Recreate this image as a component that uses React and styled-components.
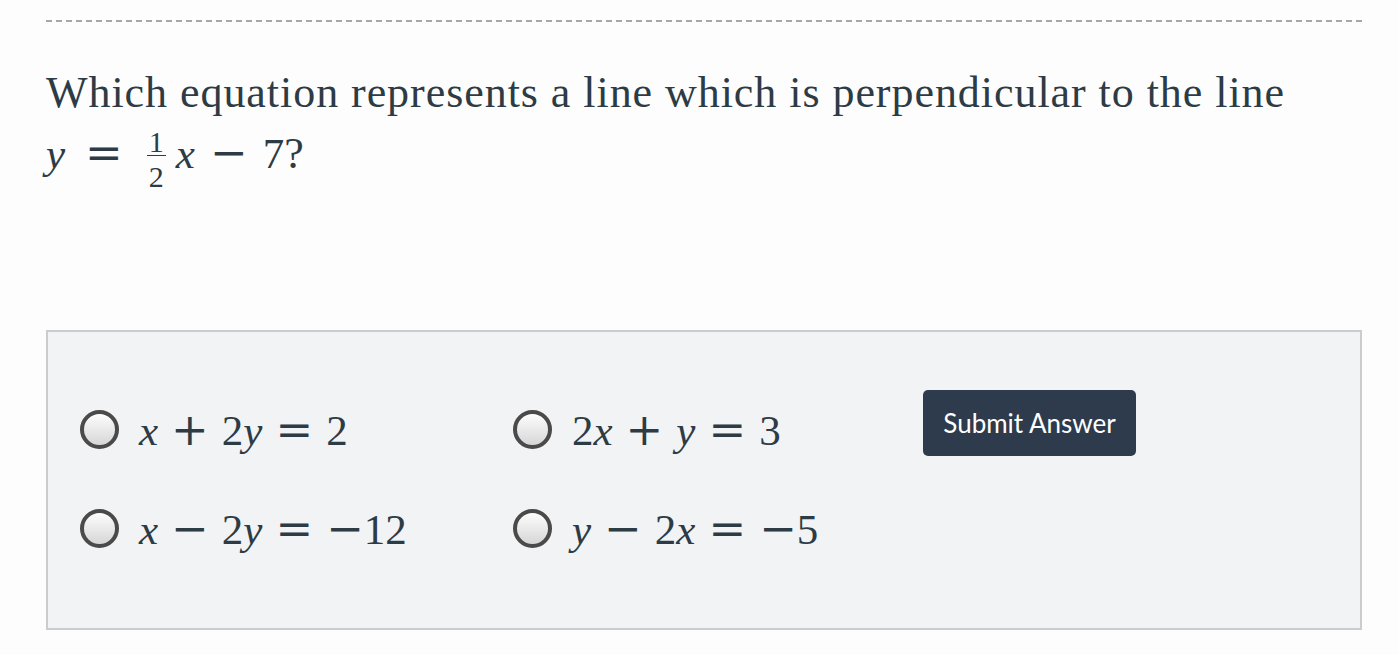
import React from 'react'
import styled, { createGlobalStyle } from 'styled-components'

const Global = createGlobalStyle`
  body {
    margin: 0;
    background: #fdfdfd;
    color: #2d3b45;
  }
`

const Page = styled.div`
  width: 1316px;
  padding: 20px 0 0 46px;
`

const Divider = styled.div`
  border-top: 2px dashed #a4a6a8;
  height: 0;
`

const Question = styled.div`
  margin-top: 41px;
  font-family: "Liberation Serif", "DejaVu Serif", serif;
  font-size: 44px;
  line-height: 60px;
  letter-spacing: 0.95px;
  color: #2d3b45;
`

const Math = styled.span`
  font-family: "Liberation Serif", serif;
  font-size: 43px;
  letter-spacing: 0;
  color: #2d3b45;
  white-space: nowrap;
`

const V = styled.i`
  font-style: italic;
`

const Op = styled.span`
  font-family: "DejaVu Serif", serif;
  font-size: 45px;
  margin: 0 ${p => p.gap ?? 13}px;
`

const Frac = styled.span`
  display: inline-flex;
  flex-direction: column;
  align-items: center;
  vertical-align: 16px;
  font-size: 30px;
  line-height: 20px;
  margin: 0 10px 0 4px;
  & > span:first-child {
    border-bottom: 1.5px solid #2d3b45;
    padding: 0 2px 3px;
  }
  & > span:last-child {
    padding-top: 11px;
  }
`

const Panel = styled.div`
  margin-top: 143px;
  height: 300px;
  box-sizing: border-box;
  background: #f2f3f5;
  border: 2px solid #cbccce;
  display: grid;
  grid-template-columns: 433px 410px auto;
  grid-template-rows: 99px 99px;
  align-items: center;
  padding: 48px 0 50px 32px;
`

const Choice = styled.label`
  display: flex;
  align-items: center;
  gap: 20px;
`

const Radio = styled.span`
  width: 31px;
  height: 31px;
  border-radius: 50%;
  border: 4px solid #4a4a4a;
  background: linear-gradient(#fdfdfd, #d6d6d6);
  flex-shrink: 0;
`

const Submit = styled.button`
  justify-self: start;
  margin-top: -13px;
  width: 213px;
  height: 66px;
  border: none;
  border-radius: 5px;
  background: #2d3b4c;
  color: #fff;
  font-family: Lato, "Open Sans", sans-serif;
  font-size: 26px;
`

const eq = (parts) =>
  parts.map((p, i) =>
    typeof p === 'string' && /^[xy]$/.test(p) ? <V key={i}>{p}</V>
    : p.op ? <Op key={i} gap={p.gap}>{p.op}</Op>
    : <span key={i}>{p}</span>
  )

const neg = { op: '−', gap: 0 }

const options = [
  ['x', { op: '+' }, '2', 'y', { op: '=' }, '2'],
  ['2', 'x', { op: '+' }, 'y', { op: '=' }, '3'],
  ['x', { op: '−' }, '2', 'y', { op: '=' }, neg, '12'],
  ['y', { op: '−' }, '2', 'x', { op: '=' }, neg, '5'],
]

export default function App() {
  return (
    <Page>
      <Global />
      <Divider />
      <Question>
        Which equation represents a line which is perpendicular to the line
        <br />
        <Math>
          <V>y</V><Op gap={20}>=</Op>
          <Frac><span>1</span><span>2</span></Frac>
          <V>x</V><Op gap={15}>−</Op>7
        </Math>?
      </Question>
      <Panel>
        <Choice><Radio /><Math>{eq(options[0])}</Math></Choice>
        <Choice><Radio /><Math>{eq(options[1])}</Math></Choice>
        <Submit>Submit Answer</Submit>
        <Choice><Radio /><Math>{eq(options[2])}</Math></Choice>
        <Choice><Radio /><Math>{eq(options[3])}</Math></Choice>
      </Panel>
    </Page>
  )
}
